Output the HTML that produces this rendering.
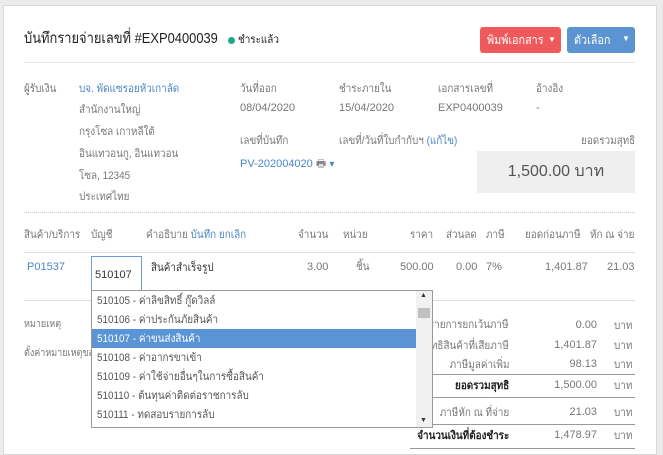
<!DOCTYPE html>
<html><head><meta charset="utf-8"><style>
*{box-sizing:border-box;margin:0;padding:0}
body{width:663px;height:450px;background:#ececec;font-family:"Liberation Sans","Noto Sans CJK SC",sans-serif;font-size:11px;line-height:14px;color:#333;position:relative;overflow:hidden}
.card{position:absolute;left:3px;top:5px;width:654px;height:450px;background:#fff;border:1px solid #d8d8d8}
.a{position:absolute;white-space:nowrap;line-height:14px}
.g{color:#777}.l{color:#4a86c8}
.r{text-align:right}
.hl{position:absolute;height:1px;background:#ddd}
.sq{display:inline-block;transform:scaleX(.9);transform-origin:left}
.sqr{display:inline-block;transform:scaleX(.9);transform-origin:right}
</style></head><body>
<div class="card"></div>
<div class="a" style="left:24px;top:31px;font-size:15px;line-height:16px;color:#222"><span style="display:inline-block;transform:scaleX(.86);transform-origin:left">บันทึกรายจ่ายเลขที่ #EXP0400039</span></div>
<div class="a" style="left:228px;top:37px;width:7px;height:7px;border-radius:50%;background:#1aaa8a"></div>
<div class="a" style="left:238px;top:33px;font-size:11px;color:#222"><span class="sq">ชำระแล้ว</span></div>
<div class="a" style="left:480px;top:27px;width:81px;height:26px;background:#f0595c;border-radius:3px;color:#fff;padding:6px 0 0 7px;font-size:12px"><span class="sq">พิมพ์เอกสาร</span><span style="position:absolute;left:68px;top:8px;font-size:8px;line-height:10px">▼</span></div>
<div class="a" style="left:567px;top:27px;width:68px;height:26px;background:#5b94d0;border-radius:3px;color:#fff;padding:6px 0 0 7px;font-size:12px"><span class="sq">ตัวเลือก</span><span style="position:absolute;left:55px;top:7px;font-size:8px;line-height:10px">▼</span></div>
<div class="hl" style="left:24px;top:62px;width:611px;background:#e5e5e5"></div>
<div class="a g" style="left:24px;top:82px"><span class="sq">ผู้รับเงิน</span></div>
<div class="a l" style="left:79px;top:82px"><span class="sq">บจ. พัดแซรอยหัวเกาลัด</span></div>
<div class="a g" style="left:79px;top:103px"><span class="sq">สำนักงานใหญ่</span></div>
<div class="a g" style="left:79px;top:125px"><span class="sq">กรุงโซล เกาหลีใต้</span></div>
<div class="a g" style="left:79px;top:147px"><span class="sq">อินแทวอนกู, อินแทวอน</span></div>
<div class="a g" style="left:79px;top:169px"><span class="sq">โซล, 12345</span></div>
<div class="a g" style="left:79px;top:190px"><span class="sq">ประเทศไทย</span></div>
<div class="a g" style="left:240px;top:82px"><span class="sq">วันที่ออก</span></div>
<div class="a g" style="left:240px;top:101px">08/04/2020</div>
<div class="a g" style="left:339px;top:82px"><span class="sq">ชำระภายใน</span></div>
<div class="a g" style="left:339px;top:101px">15/04/2020</div>
<div class="a g" style="left:438px;top:82px"><span class="sq">เอกสารเลขที่</span></div>
<div class="a g" style="left:438px;top:101px">EXP0400039</div>
<div class="a g" style="left:536px;top:82px"><span class="sq">อ้างอิง</span></div>
<div class="a g" style="left:536px;top:101px">-</div>
<div class="a g" style="left:240px;top:134px"><span class="sq">เลขที่บันทึก</span></div>
<div class="a g" style="left:339px;top:134px"><span class="sq">เลขที่/วันที่ใบกำกับฯ <span class="l">(แก้ไข)</span></span></div>
<div class="a g r" style="left:535px;top:134px;width:100px"><span class="sqr">ยอดรวมสุทธิ</span></div>
<div class="a l" style="left:240px;top:157px">PV-202004020 <span style="color:#888">🖶</span> <span style="font-size:10px">▾</span></div>
<div class="a" style="left:477px;top:151px;width:158px;height:42px;background:#efefef;font-size:16px;line-height:18px;color:#555;text-align:center;padding-top:12px">1,500.00 บาท</div>
<div class="a" style="left:24px;top:212px;width:611px;border-top:1px dotted #ccc"></div>
<div class="a g" style="left:24px;top:228px"><span class="sq">สินค้า/บริการ</span></div>
<div class="a g" style="left:91px;top:228px"><span class="sq">บัญชี</span></div>
<div class="a g" style="left:146px;top:228px"><span class="sq">คำอธิบาย <span class="l">บันทึก ยกเลิก</span></span></div>
<div class="a g" style="left:298px;top:228px"><span class="sq">จำนวน</span></div>
<div class="a g" style="left:343px;top:228px"><span class="sq">หน่วย</span></div>
<div class="a g" style="left:410px;top:228px"><span class="sq">ราคา</span></div>
<div class="a g" style="left:446px;top:228px"><span class="sq">ส่วนลด</span></div>
<div class="a g" style="left:486px;top:228px"><span class="sq">ภาษี</span></div>
<div class="a g" style="left:525px;top:228px"><span class="sq">ยอดก่อนภาษี</span></div>
<div class="a g" style="left:590px;top:228px"><span class="sq">หัก ณ จ่าย</span></div>
<div class="hl" style="left:24px;top:252px;width:611px"></div>
<div class="a l" style="left:27px;top:260px">P01537</div>
<div class="a" style="left:91px;top:256px;width:51px;height:35px;border:1px solid #6a9fd8;background:#fff;padding:11px 0 0 3px;color:#333">510107</div>
<div class="a" style="left:151px;top:261px"><span class="sq">สินค้าสำเร็จรูป</span></div>
<div class="a g" style="left:307px;top:260px">3.00</div>
<div class="a g" style="left:356px;top:260px"><span class="sq">ชิ้น</span></div>
<div class="a g" style="left:400px;top:260px">500.00</div>
<div class="a g" style="left:456px;top:260px">0.00</div>
<div class="a g" style="left:486px;top:260px">7%</div>
<div class="a g" style="left:545px;top:260px">1,401.87</div>
<div class="a g" style="left:607px;top:260px">21.03</div>
<div class="hl" style="left:24px;top:300px;width:611px"></div>
<div class="a g" style="left:24px;top:318px;font-size:10px"><span class="sq">หมายเหตุ</span></div>
<div class="a g" style="left:24px;top:347px;font-size:10px"><span class="sq">ตั้งค่าหมายเหตุของ</span></div>
<div class="a g r" style="left:380px;top:318px;width:129px"><span class="sqr">รายการยกเว้นภาษี</span></div>
<div class="a g r" style="left:380px;top:339px;width:129px"><span class="sqr">มูลค่าสุทธิสินค้าที่เสียภาษี</span></div>
<div class="a g r" style="left:380px;top:358px;width:129px"><span class="sqr">ภาษีมูลค่าเพิ่ม</span></div>
<div class="a r" style="left:380px;top:379px;width:129px;font-weight:bold;color:#222"><span class="sqr">ยอดรวมสุทธิ</span></div>
<div class="a g r" style="left:380px;top:406px;width:129px"><span class="sqr">ภาษีหัก ณ ที่จ่าย</span></div>
<div class="a r" style="left:380px;top:429px;width:129px;font-weight:bold;color:#222"><span class="sqr">จำนวนเงินที่ต้องชำระ</span></div>
<div class="a g r" style="left:530px;top:318px;width:67px">0.00</div>
<div class="a g r" style="left:530px;top:338px;width:67px">1,401.87</div>
<div class="a g r" style="left:530px;top:357px;width:67px">98.13</div>
<div class="a g r" style="left:530px;top:378px;width:67px">1,500.00</div>
<div class="a g r" style="left:530px;top:405px;width:67px">21.03</div>
<div class="a g r" style="left:530px;top:428px;width:67px">1,478.97</div>
<div class="a g" style="left:614px;top:319px"><span class="sq">บาท</span></div>
<div class="a g" style="left:614px;top:339px"><span class="sq">บาท</span></div>
<div class="a g" style="left:614px;top:358px"><span class="sq">บาท</span></div>
<div class="a g" style="left:614px;top:379px"><span class="sq">บาท</span></div>
<div class="a g" style="left:614px;top:406px"><span class="sq">บาท</span></div>
<div class="a g" style="left:614px;top:429px"><span class="sq">บาท</span></div>
<div class="hl" style="left:410px;top:374px;width:225px;background:#999"></div>
<div class="hl" style="left:410px;top:397px;width:225px;background:#999"></div>
<div class="hl" style="left:410px;top:424px;width:225px;background:#999"></div>
<div class="hl" style="left:410px;top:448px;width:225px;background:#999"></div>
<div class="a" style="left:91px;top:290px;width:342px;height:138px;border:1px solid #999;background:#fff;overflow:hidden">
<div style="position:absolute;left:0;top:0;width:324px;font-size:11px;color:#555">
<div style="height:19px;padding:3px 0 0 5px"><span class="sq">510105 - ค่าลิขสิทธิ์ กู๊ดวิลล์</span></div>
<div style="height:19px;padding:3px 0 0 5px"><span class="sq">510106 - ค่าประกันภัยสินค้า</span></div>
<div style="height:19px;padding:3px 0 0 5px;background:#5b94d6;color:#fff"><span class="sq">510107 - ค่าขนส่งสินค้า</span></div>
<div style="height:19px;padding:3px 0 0 5px"><span class="sq">510108 - ค่าอากรขาเข้า</span></div>
<div style="height:19px;padding:3px 0 0 5px"><span class="sq">510109 - ค่าใช้จ่ายอื่นๆในการซื้อสินค้า</span></div>
<div style="height:19px;padding:3px 0 0 5px"><span class="sq">510110 - ต้นทุนค่าติดต่อราชการลับ</span></div>
<div style="height:19px;padding:3px 0 0 5px"><span class="sq">510111 - ทดสอบรายการลับ</span></div>
<div style="height:19px;padding:3px 0 0 5px"><span class="sq">510112 - ต้นทุนค่าบริการ</span></div>
</div>
<div style="position:absolute;right:0;top:0;width:16px;height:136px;background:#f1f1f1">
<div style="position:absolute;left:4px;top:1px;font-size:7px;line-height:8px;color:#333">▲</div>
<div style="position:absolute;left:2px;top:17px;width:12px;height:10px;background:#c1c1c1"></div>
<div style="position:absolute;left:4px;bottom:2px;font-size:7px;line-height:8px;color:#333">▼</div>
</div>
</div>
</body></html>
